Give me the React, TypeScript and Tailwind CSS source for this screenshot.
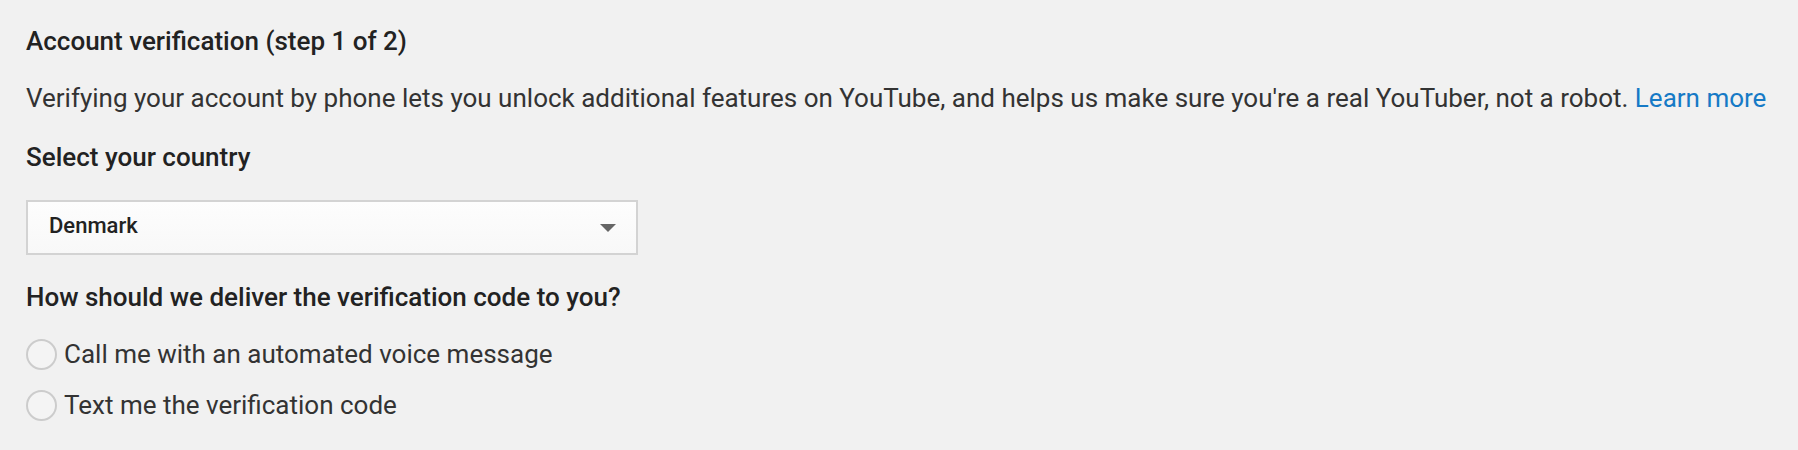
export default function App() {
  return (
    <div className="min-h-[450px] w-full bg-[#f1f1f1] pl-[26px] pt-[25px] text-[#333]" style={{ fontFamily: "Roboto, 'Noto Sans', sans-serif" }}>
      <h1 className="text-[26px] leading-[32px] font-medium text-[#222]">Account verification (step 1 of 2)</h1>
      <p className="mt-[25px] text-[26px] leading-[32px]">
        Verifying your account by phone lets you unlock additional features on YouTube, and helps us make sure you're a real YouTuber, not a robot.{" "}
        <a className="text-[#167ac6]">Learn more</a>
      </p>
      <div className="mt-[27px] text-[26px] leading-[32px] font-medium text-[#222]">Select your country</div>
      <div className="mt-[27px] flex h-[55px] w-[612px] items-center justify-between border-2 border-[#d3d3d3] bg-gradient-to-b from-[#fdfdfd] to-[#f8f8f8] pl-[21px] pr-[20px]">
        <span className="pb-[3px] text-[22px] font-medium leading-[28px] text-[#222]">Denmark</span>
        <svg width="16" height="8" viewBox="0 0 16 8">
          <path d="M0 0 L16 0 L8 8 Z" fill="#666" />
        </svg>
      </div>
      <div className="mt-[26px] text-[26px] leading-[32px] font-medium text-[#222]">How should we deliver the verification code to you?</div>
      <div className="mt-[25px] flex flex-col gap-[19px]">
        <label className="flex h-[32px] items-center gap-[7px] text-[26px] leading-[32px]">
          <span className="h-[31px] w-[31px] shrink-0 rounded-full border-2 border-[#cccccc] bg-[#f4f4f4]" />
          <span>Call me with an automated voice message</span>
        </label>
        <label className="flex h-[32px] items-center gap-[7px] text-[26px] leading-[32px]">
          <span className="h-[31px] w-[31px] shrink-0 rounded-full border-2 border-[#cccccc] bg-[#f4f4f4]" />
          <span>Text me the verification code</span>
        </label>
      </div>
    </div>
  );
}
